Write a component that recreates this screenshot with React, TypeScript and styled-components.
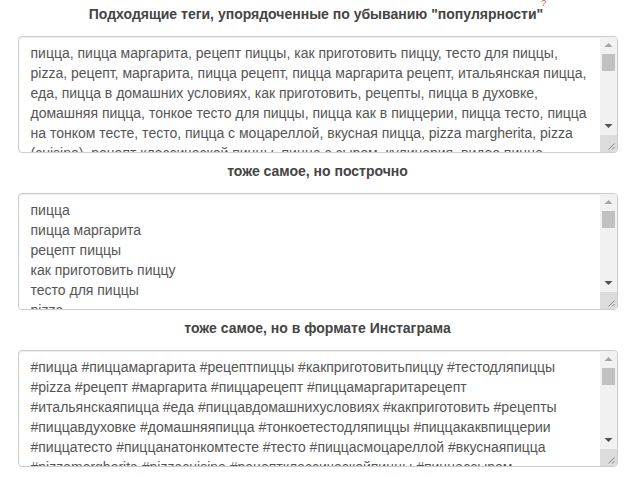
import styled, { createGlobalStyle } from 'styled-components';

const Global = createGlobalStyle`
  body {
    margin: 0;
    background: #fff;
    font-family: 'Liberation Sans', Arial, sans-serif;
  }
`;

const Page = styled.div`
  width: 600px;
  margin: 0 auto;
`;

const Section = styled.section`
  display: flex;
  flex-direction: column;
  margin-bottom: 8px;
`;

const Title = styled.h3`
  margin: 0 0 12px;
  font-size: 14px;
  line-height: 20px;
  font-weight: 700;
  color: #444;
  text-align: center;
`;

const Hint = styled.sup`
  position: relative;
  top: -7px;
  margin-left: -2px;
  font-size: 9px;
  font-weight: 400;
  color: #d9534f;
`;

const Field = styled.div`
  position: relative;
  height: 117px;
`;

const Area = styled.textarea`
  box-sizing: border-box;
  display: block;
  width: 100%;
  height: 100%;
  margin: 0;
  padding: 6px 29px 6px 12px;
  border: 1px solid #ccc;
  border-radius: 4px;
  box-shadow: inset 0 1px 1px rgba(0, 0, 0, 0.075);
  font-family: 'Liberation Sans', Arial, sans-serif;
  font-size: 14px;
  line-height: 20px;
  color: #555;
  background: #fff;
  resize: none;
  overflow: hidden;
  outline: none;
`;

/* fake scrollbar drawn over the right edge of the textarea */
const Bar = styled.div`
  position: absolute;
  top: 1px;
  right: 1px;
  bottom: 1px;
  width: 17px;
  display: flex;
  flex-direction: column;
  background: #f1f1f1;
  border-radius: 0 3px 3px 0;
  overflow: hidden;
`;

const Btn = styled.div`
  height: 17px;
  flex: none;
  display: flex;
  align-items: center;
  justify-content: center;
`;

const Track = styled.div`
  flex: 1;
  display: flex;
  flex-direction: column;
  align-items: center;
`;

const Thumb = styled.div`
  width: 13px;
  height: 17px;
  background: #c1c1c1;
`;

const Corner = styled.div`
  height: 17px;
  flex: none;
  background: #dcdcdc;
  display: flex;
  align-items: center;
  justify-content: center;
`;

function Scroll() {
  return (
    <Bar>
      <Btn>
        <svg width="9" height="6" viewBox="0 0 9 6">
          <path d="M0.5 5 L4.5 1 L8.5 5 Z" fill="#a3a3a3" />
        </svg>
      </Btn>
      <Track>
        <Thumb />
      </Track>
      <Btn>
        <svg width="9" height="6" viewBox="0 0 9 6">
          <path d="M0.5 1 L8.5 1 L4.5 5 Z" fill="#505050" />
        </svg>
      </Btn>
      <Corner>
        <svg width="17" height="17" viewBox="0 0 17 17">
          <path d="M14.5 8.5 L8.5 14.5 M14.5 12 L12 14.5" stroke="#888" strokeWidth="1" />
        </svg>
      </Corner>
    </Bar>
  );
}

const tags = [
  'пицца',
  'пицца маргарита',
  'рецепт пиццы',
  'как приготовить пиццу',
  'тесто для пиццы',
  'pizza',
  'рецепт',
  'маргарита',
  'пицца рецепт',
  'пицца маргарита рецепт',
  'итальянская пицца',
  'еда',
  'пицца в домашних условиях',
  'как приготовить',
  'рецепты',
  'пицца в духовке',
  'домашняя пицца',
  'тонкое тесто для пиццы',
  'пицца как в пиццерии',
  'пицца тесто',
  'пицца на тонком тесте',
  'тесто',
  'пицца с моцареллой',
  'вкусная пицца',
  'pizza margherita',
  'pizza (cuisine)',
  'рецепт классической пиццы',
  'пицца с сыром',
  'кулинария',
  'видео пицца',
  'пицца своими руками',
  'простой рецепт пиццы',
  'соус для пиццы',
  'пицца с помидорами',
  'пицца с базиликом',
  'неаполитанская пицца',
  'пицца на сковороде',
  'быстрая пицца',
  'дрожжевое тесто',
  'italian pizza',
  'homemade pizza',
  'pizza recipe',
];

const hashtags = tags
  .map((t) => '#' + t.replace(/[\s()]/g, ''))
  .join(' ');

export default function App() {
  return (
    <Page>
      <Global />
      <Section>
        <Title>
          Подходящие теги, упорядоченные по убыванию "популярности"
          <Hint>?</Hint>
        </Title>
        <Field>
          <Area readOnly value={tags.join(', ')} />
          <Scroll />
        </Field>
      </Section>
      <Section>
        <Title>тоже самое, но построчно</Title>
        <Field>
          <Area readOnly value={tags.join('\n')} />
          <Scroll />
        </Field>
      </Section>
      <Section>
        <Title>тоже самое, но в формате Инстаграма</Title>
        <Field>
          <Area readOnly value={hashtags} />
          <Scroll />
        </Field>
      </Section>
    </Page>
  );
}
